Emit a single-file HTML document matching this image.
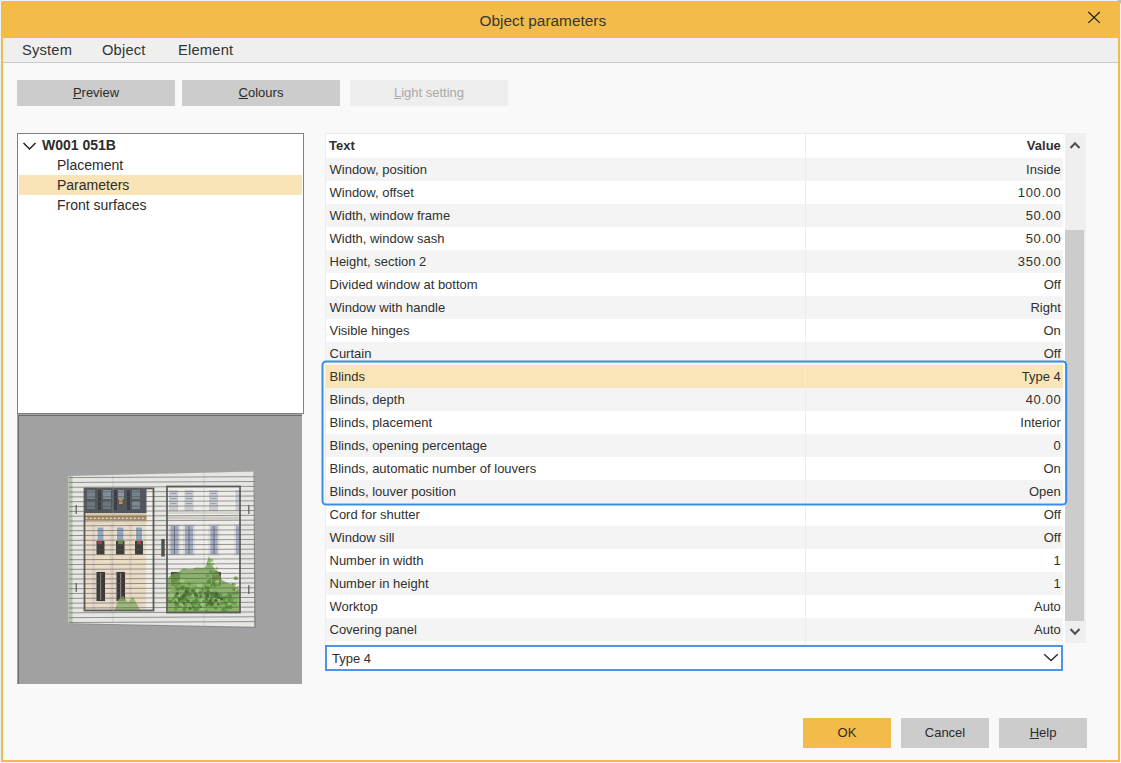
<!DOCTYPE html>
<html><head><meta charset="utf-8">
<style>
*{box-sizing:border-box;margin:0;padding:0}
html,body{width:1121px;height:763px;overflow:hidden;background:#eef1f6;font-family:"Liberation Sans",sans-serif;color:#303030}
.abs{position:absolute}
#dlg{position:absolute;left:1px;top:1px;width:1119px;height:761px;background:#f9f9f9;border:2px solid #f3bc4a;border-top:0;border-radius:2px 2px 0 0}
#title{position:absolute;left:1px;top:1px;width:1119px;height:37px;background:#f3bc4a;border-radius:2px 0 0 0}
#ttl{position:absolute;left:479.5px;top:12.3px;font-size:15.4px;line-height:18px;color:#363636;white-space:nowrap}
#menu{position:absolute;left:3px;top:38px;width:1115px;height:25px;background:#efefef;border-bottom:1px solid #c9c9c9}
.mi{position:absolute;top:41.7px;font-size:14.7px;line-height:17px;color:#333;white-space:nowrap;letter-spacing:0.2px}
.btn{position:absolute;top:80px;height:26px;width:158px;background:#cccccc;font-size:13px;line-height:26px;text-align:center;color:#2b2b2b}
.btn u{text-decoration:underline;text-underline-offset:1px}
#tree{position:absolute;left:17px;top:133px;width:287px;height:281px;background:#fff;border:1px solid #7b8089}
.ti{position:absolute;left:39px;height:20px;line-height:20px;font-size:14px;white-space:nowrap;color:#2c2c2c}
#prev{position:absolute;left:17px;top:414px;width:285px;height:270px;background:#a1a1a1;border-left:1px solid #6d6d6d}
#tbl{position:absolute;left:325px;top:133px;width:740px;height:510px;background:#fff;border-top:1px solid #e9e9e9;border-left:1px solid #ececec}
.row{position:absolute;left:0px;width:737px;height:23px;font-size:13px;line-height:23px;white-space:nowrap}
.row .k{position:absolute;left:3.5px;top:0}
.row .v{position:absolute;right:2.2px;top:0}
.g{background:#f4f4f4}
.n{letter-spacing:0.65px;margin-right:-0.65px}
.sel{background:#f9e5b8}
#div{position:absolute;left:479px;top:0;width:1px;height:509px;background:#ececec}
#sb{position:absolute;left:1065px;top:133px;width:21px;height:510px;background:#efefef}
#thumb{position:absolute;left:1065px;top:230px;width:19px;height:391px;background:#cccccc}
#selbox{position:absolute;left:321.6px;top:360.6px;width:745.6px;height:144.6px;border:2px solid #3d8de6;border-radius:4px}
#dd{position:absolute;left:325px;top:645px;width:738px;height:26px;background:#fff;border:2px solid #4f94e4}
.bb{position:absolute;top:718px;height:30px;width:88px;background:#cccccc;font-size:13px;line-height:30px;text-align:center;color:#2b2b2b}
</style></head><body>
<div id="dlg"></div>
<div class="abs" style="left:1117px;top:0;width:4px;height:4px;background:#b4c2b6;clip-path:polygon(0 0,100% 0,100% 100%)"></div>
<div id="title"></div>
<div id="ttl">Object parameters</div>
<svg class="abs" style="left:1086px;top:9px" width="16" height="16" viewBox="0 0 16 16"><path d="M2.3 3L13.8 13.8M13.8 3L2.3 13.8" stroke="#1e1e1e" stroke-width="1.15" fill="none"/></svg>
<div id="menu"></div>
<div class="mi" style="left:22px">System</div>
<div class="mi" style="left:102px">Object</div>
<div class="mi" style="left:178px">Element</div>

<div class="btn" style="left:17px"><u>P</u>review</div>
<div class="btn" style="left:182px"><u>C</u>olours</div>
<div class="btn" style="left:350px;background:#eeeeee;color:#a9a9a9"><u>L</u>ight setting</div>

<div id="tree">
  <div class="abs" style="left:1px;top:41px;width:283px;height:20px;background:#f8e4b6"></div>
  <svg class="abs" style="left:4px;top:7.3px" width="16" height="10" viewBox="0 0 16 10"><path d="M1.5 2L7.5 8L13.5 2" stroke="#222" stroke-width="1.5" fill="none"/></svg>
  <div class="ti" style="left:24px;top:1px;font-weight:bold">W001 051B</div>
  <div class="ti" style="top:21px">Placement</div>
  <div class="ti" style="top:41px">Parameters</div>
  <div class="ti" style="top:61px">Front surfaces</div>
</div>
<!--PREV--><svg class="abs" style="left:17px;top:414px" width="285" height="270" viewBox="17 414 285 270">
<rect x="17" y="414" width="285" height="270" fill="#a1a1a1"/>
<rect x="18" y="415" width="1" height="269" fill="#6c6c6c"/>
<rect x="18" y="415" width="284" height="1" fill="#6c6c6c"/>
<polygon points="69,476.5 254,471.5 256,628 69,624" fill="#8a8a8a"/>
<polygon points="68.5,476 253.5,471.5 254.2,626.8 68.5,623.2" fill="#e6e6e2"/>
<polygon points="68.5,476 72.5,476 72.5,623.2 68.5,623.2" fill="#b3c3ae"/>
<!-- left pane -->
<rect x="84.5" y="488.5" width="69" height="122" fill="#ecdcc6"/>
<rect x="146" y="488.5" width="7.5" height="122" fill="#f2eee8"/>
<rect x="84.5" y="488.5" width="62" height="24.5" fill="#525860"/>
<rect x="87" y="490" width="8" height="9" fill="#76828c"/><rect x="98" y="490" width="3" height="20" fill="#3a3e44"/><rect x="103" y="490" width="8" height="9" fill="#828e98"/><rect x="114" y="490" width="3" height="20" fill="#3a3e44"/><rect x="118" y="490" width="6" height="9" fill="#8c969c"/><rect x="127" y="490" width="3" height="20" fill="#3a3e44"/><rect x="132" y="490" width="8" height="9" fill="#76828c"/>
<rect x="87" y="501" width="8" height="8" fill="#6a7680"/><rect x="103" y="501" width="8" height="8" fill="#6a7680"/><rect x="119" y="499" width="3.5" height="5" fill="#e58a3c"/><rect x="132" y="501" width="8" height="8" fill="#7a8690"/>
<rect x="84.5" y="513" width="62" height="3" fill="#d8c6a6"/>
<rect x="84.5" y="516" width="62" height="4.5" fill="#a88a5e"/>
<g fill="#f0e6d0"><rect x="86" y="517.5" width="1.5" height="1.5"/><rect x="90" y="517.5" width="1.5" height="1.5"/><rect x="94" y="517.5" width="1.5" height="1.5"/><rect x="98" y="517.5" width="1.5" height="1.5"/><rect x="102" y="517.5" width="1.5" height="1.5"/><rect x="106" y="517.5" width="1.5" height="1.5"/><rect x="110" y="517.5" width="1.5" height="1.5"/><rect x="114" y="517.5" width="1.5" height="1.5"/><rect x="118" y="517.5" width="1.5" height="1.5"/><rect x="122" y="517.5" width="1.5" height="1.5"/><rect x="126" y="517.5" width="1.5" height="1.5"/><rect x="130" y="517.5" width="1.5" height="1.5"/><rect x="134" y="517.5" width="1.5" height="1.5"/><rect x="138" y="517.5" width="1.5" height="1.5"/><rect x="142" y="517.5" width="1.5" height="1.5"/></g>
<rect x="84.5" y="520.5" width="62" height="3" fill="#e4d4bc"/>
<g fill="#dcd0c4"><rect x="92" y="524" width="3" height="86"/><rect x="110" y="524" width="3" height="86"/><rect x="129" y="524" width="3" height="86"/></g>
<rect x="96.5" y="526.5" width="8" height="28" fill="#e8e6e6"/><rect x="97.5" y="527.5" width="6" height="14" fill="#94a6bc"/><rect x="96.5" y="541" width="8" height="13.5" fill="#403e3a"/>
<rect x="116" y="526.5" width="8.5" height="28" fill="#e8e6e6"/><rect x="117" y="527.5" width="6.5" height="14" fill="#94a6bc"/><rect x="116" y="541" width="8.5" height="13.5" fill="#3e4038"/>
<rect x="135" y="526.5" width="8" height="28" fill="#e8e6e6"/><rect x="136" y="527.5" width="6" height="14" fill="#94a6bc"/><rect x="135" y="541" width="8" height="13.5" fill="#403e3a"/>
<rect x="98" y="541" width="4" height="3" fill="#b04040"/><rect x="118" y="541" width="5" height="3" fill="#6a8a3a"/><rect x="137" y="541" width="4" height="3" fill="#b04040"/>
<rect x="95" y="570.5" width="11" height="32" fill="#ddd6d0"/><rect x="115" y="570.5" width="11" height="32" fill="#ddd6d0"/>
<rect x="96.5" y="572" width="8.5" height="29" fill="#3a3836"/><rect x="116.5" y="572" width="8.5" height="29" fill="#3a3836"/>
<rect x="100" y="573" width="1.2" height="27" fill="#8a8680"/><rect x="120" y="573" width="1.2" height="27" fill="#8a8680"/>
<path d="M115 610 L118 600 L123 596 L128 602 L133 597 L137 604 L140 610Z" fill="#8ab066" opacity="0.8"/>
<rect x="84.5" y="488.5" width="69" height="122" fill="none" stroke="#5a5a5a" stroke-width="1.8"/>
<!-- right pane -->
<rect x="167" y="486.5" width="73" height="126" fill="#eeede9"/>
<g fill="#c9ccd2"><rect x="169" y="490" width="9" height="21"/><rect x="184.5" y="490" width="9" height="21"/><rect x="209" y="490" width="9" height="21"/><rect x="235.5" y="490" width="4" height="21"/></g>
<g fill="#9aa2b0"><rect x="170.5" y="493" width="6" height="1"/><rect x="170.5" y="498" width="6" height="1"/><rect x="170.5" y="503" width="6" height="1"/><rect x="186" y="493" width="6" height="1"/><rect x="186" y="498" width="6" height="1"/><rect x="186" y="503" width="6" height="1"/><rect x="210.5" y="493" width="6" height="1"/><rect x="210.5" y="498" width="6" height="1"/><rect x="210.5" y="503" width="6" height="1"/></g>
<rect x="167" y="511.5" width="73" height="2.5" fill="#d6d6d0"/><rect x="167" y="516.5" width="73" height="3" fill="#cbcbc4"/>
<g fill="#dadada"><rect x="168.5" y="524" width="12" height="32"/><rect x="183" y="524" width="12" height="32"/><rect x="208.5" y="524" width="11" height="32"/><rect x="234" y="524" width="6" height="32"/></g>
<g fill="#a3acc2"><rect x="170.5" y="526" width="8" height="28"/><rect x="185" y="526" width="8" height="28"/><rect x="210.5" y="526" width="7" height="28"/><rect x="236" y="526" width="3.5" height="28"/></g>
<g fill="#6a7288"><rect x="174" y="526" width="1" height="28"/><rect x="188.5" y="526" width="1" height="28"/><rect x="213.5" y="526" width="1" height="28"/></g>
<rect x="171" y="572" width="9" height="14" fill="#4e4e48"/><rect x="212" y="572" width="9" height="14" fill="#4e4e48"/>
<defs><clipPath id="rp"><rect x="167" y="486.5" width="73" height="126"/></clipPath></defs>
<g clip-path="url(#rp)"><path d="M168 612 L168 578 C172 572 178 574 181 570 C185 566 190 572 194 568 C198 566 203 570 206 566 L209 556 L212 566 C216 570 220 574 222 580 C228 584 234 584 240 590 L240 612Z" fill="#73a34c" opacity="0.8"/>
<circle cx="180.7" cy="597.9" r="3.1" fill="#9cc47e"/><circle cx="180.7" cy="607.4" r="1.8" fill="#9cc47e"/><circle cx="185.6" cy="605.4" r="1.7" fill="#5e9440"/><circle cx="172.0" cy="597.2" r="3.0" fill="#6fa04a"/><circle cx="184.7" cy="592.7" r="2.3" fill="#86b462"/><circle cx="185.4" cy="606.6" r="1.6" fill="#6fa04a"/><circle cx="173.3" cy="587.7" r="1.6" fill="#9cc47e"/><circle cx="177.1" cy="598.9" r="1.8" fill="#86b462"/><circle cx="185.9" cy="596.0" r="2.6" fill="#9cc47e"/><circle cx="186.3" cy="593.0" r="2.4" fill="#6fa04a"/><circle cx="187.8" cy="590.1" r="1.9" fill="#5e9440"/><circle cx="168.8" cy="598.0" r="1.7" fill="#6fa04a"/><circle cx="191.7" cy="592.4" r="3.1" fill="#6fa04a"/><circle cx="169.5" cy="592.0" r="2.7" fill="#9cc47e"/><circle cx="170.0" cy="600.1" r="2.8" fill="#5e9440"/><circle cx="177.4" cy="590.0" r="1.5" fill="#9cc47e"/><circle cx="189.2" cy="583.8" r="1.9" fill="#6fa04a"/><circle cx="168.3" cy="594.9" r="2.3" fill="#86b462"/><circle cx="180.5" cy="586.1" r="2.7" fill="#86b462"/><circle cx="179.7" cy="592.3" r="2.2" fill="#86b462"/><circle cx="195.3" cy="599.0" r="3.2" fill="#6fa04a"/><circle cx="173.9" cy="592.6" r="3.0" fill="#6fa04a"/><circle cx="180.4" cy="580.3" r="2.5" fill="#5e9440"/><circle cx="178.8" cy="582.4" r="1.9" fill="#86b462"/><circle cx="185.4" cy="584.1" r="2.5" fill="#86b462"/><circle cx="192.3" cy="585.9" r="1.8" fill="#86b462"/><circle cx="190.9" cy="588.0" r="1.8" fill="#86b462"/><circle cx="187.2" cy="592.4" r="2.3" fill="#6fa04a"/><circle cx="179.8" cy="583.3" r="1.6" fill="#5e9440"/><circle cx="174.7" cy="602.5" r="1.9" fill="#9cc47e"/><circle cx="176.2" cy="585.6" r="2.7" fill="#6fa04a"/><circle cx="171.5" cy="595.3" r="2.6" fill="#6fa04a"/><circle cx="175.8" cy="609.4" r="1.8" fill="#6fa04a"/><circle cx="169.9" cy="593.2" r="1.9" fill="#6fa04a"/><circle cx="172.9" cy="591.8" r="2.5" fill="#86b462"/><circle cx="180.6" cy="590.6" r="2.7" fill="#86b462"/><circle cx="184.5" cy="609.6" r="2.3" fill="#5e9440"/><circle cx="168.6" cy="600.4" r="2.3" fill="#5e9440"/><circle cx="170.1" cy="597.5" r="2.8" fill="#86b462"/><circle cx="177.9" cy="601.9" r="3.0" fill="#9cc47e"/><circle cx="182.0" cy="580.5" r="2.6" fill="#9cc47e"/><circle cx="184.3" cy="599.5" r="1.6" fill="#6fa04a"/><circle cx="188.4" cy="592.4" r="2.7" fill="#9cc47e"/><circle cx="180.3" cy="606.8" r="1.6" fill="#6fa04a"/><circle cx="176.7" cy="582.8" r="1.5" fill="#6fa04a"/><circle cx="181.9" cy="599.7" r="3.1" fill="#5e9440"/><circle cx="193.1" cy="591.8" r="1.7" fill="#86b462"/><circle cx="182.5" cy="604.1" r="2.1" fill="#9cc47e"/><circle cx="182.0" cy="587.7" r="2.2" fill="#5e9440"/><circle cx="173.6" cy="593.8" r="2.9" fill="#86b462"/><circle cx="192.6" cy="592.3" r="2.5" fill="#5e9440"/><circle cx="173.9" cy="584.3" r="2.1" fill="#6fa04a"/><circle cx="187.9" cy="610.4" r="2.0" fill="#86b462"/><circle cx="171.2" cy="595.1" r="3.1" fill="#9cc47e"/><circle cx="178.7" cy="596.6" r="2.6" fill="#9cc47e"/><circle cx="177.0" cy="606.5" r="2.0" fill="#6fa04a"/><circle cx="187.0" cy="589.0" r="2.1" fill="#6fa04a"/><circle cx="185.9" cy="593.0" r="1.8" fill="#5e9440"/><circle cx="174.6" cy="584.5" r="1.6" fill="#6fa04a"/><circle cx="180.5" cy="600.2" r="2.6" fill="#5e9440"/><circle cx="219.7" cy="602.2" r="1.8" fill="#9cc47e"/><circle cx="197.2" cy="603.0" r="2.8" fill="#6fa04a"/><circle cx="194.7" cy="590.6" r="2.1" fill="#86b462"/><circle cx="201.6" cy="605.2" r="3.0" fill="#6fa04a"/><circle cx="202.1" cy="608.0" r="2.2" fill="#9cc47e"/><circle cx="203.5" cy="600.5" r="3.0" fill="#9cc47e"/><circle cx="206.6" cy="601.3" r="2.4" fill="#5e9440"/><circle cx="203.8" cy="601.2" r="1.8" fill="#6fa04a"/><circle cx="195.8" cy="608.2" r="3.2" fill="#5e9440"/><circle cx="206.2" cy="605.1" r="2.0" fill="#6fa04a"/><circle cx="200.2" cy="585.3" r="2.2" fill="#9cc47e"/><circle cx="213.6" cy="596.6" r="1.5" fill="#6fa04a"/><circle cx="202.7" cy="584.0" r="2.4" fill="#86b462"/><circle cx="217.8" cy="597.5" r="2.7" fill="#9cc47e"/><circle cx="219.3" cy="596.8" r="3.1" fill="#6fa04a"/><circle cx="213.3" cy="595.3" r="2.4" fill="#86b462"/><circle cx="205.7" cy="606.6" r="2.5" fill="#5e9440"/><circle cx="210.5" cy="609.7" r="3.0" fill="#86b462"/><circle cx="198.7" cy="587.0" r="2.4" fill="#5e9440"/><circle cx="207.3" cy="588.6" r="2.4" fill="#6fa04a"/><circle cx="208.4" cy="583.8" r="3.1" fill="#9cc47e"/><circle cx="206.4" cy="610.7" r="1.7" fill="#6fa04a"/><circle cx="211.1" cy="584.8" r="2.4" fill="#9cc47e"/><circle cx="201.9" cy="589.9" r="2.3" fill="#5e9440"/><circle cx="202.9" cy="605.8" r="3.0" fill="#9cc47e"/><circle cx="205.8" cy="586.0" r="2.2" fill="#6fa04a"/><circle cx="195.2" cy="589.4" r="2.7" fill="#5e9440"/><circle cx="212.2" cy="589.8" r="2.3" fill="#9cc47e"/><circle cx="212.4" cy="586.4" r="2.4" fill="#5e9440"/><circle cx="212.0" cy="602.6" r="3.0" fill="#6fa04a"/><circle cx="201.0" cy="594.6" r="2.4" fill="#86b462"/><circle cx="206.2" cy="607.2" r="2.4" fill="#86b462"/><circle cx="205.9" cy="606.8" r="2.5" fill="#86b462"/><circle cx="196.4" cy="603.7" r="2.9" fill="#86b462"/><circle cx="199.1" cy="591.8" r="3.1" fill="#86b462"/><circle cx="213.9" cy="588.4" r="1.7" fill="#86b462"/><circle cx="201.4" cy="595.2" r="3.1" fill="#86b462"/><circle cx="195.4" cy="600.6" r="2.9" fill="#6fa04a"/><circle cx="195.4" cy="602.1" r="3.0" fill="#5e9440"/><circle cx="192.7" cy="597.2" r="2.8" fill="#86b462"/><circle cx="214.7" cy="596.5" r="1.5" fill="#9cc47e"/><circle cx="193.7" cy="588.2" r="1.8" fill="#86b462"/><circle cx="219.4" cy="595.9" r="2.8" fill="#5e9440"/><circle cx="201.5" cy="594.9" r="2.1" fill="#86b462"/><circle cx="208.2" cy="583.4" r="2.7" fill="#86b462"/><circle cx="194.8" cy="595.7" r="2.8" fill="#9cc47e"/><circle cx="218.5" cy="599.9" r="1.7" fill="#6fa04a"/><circle cx="199.4" cy="585.4" r="2.9" fill="#9cc47e"/><circle cx="207.2" cy="588.3" r="2.5" fill="#5e9440"/><circle cx="214.8" cy="590.2" r="3.0" fill="#86b462"/><circle cx="215.1" cy="594.4" r="3.0" fill="#5e9440"/><circle cx="213.6" cy="604.4" r="2.2" fill="#86b462"/><circle cx="191.3" cy="592.6" r="2.3" fill="#6fa04a"/><circle cx="198.6" cy="589.0" r="2.2" fill="#86b462"/><circle cx="206.1" cy="593.9" r="3.2" fill="#86b462"/><circle cx="211.4" cy="604.3" r="3.2" fill="#6fa04a"/><circle cx="196.6" cy="595.4" r="2.4" fill="#86b462"/><circle cx="197.3" cy="590.7" r="2.1" fill="#9cc47e"/><circle cx="239.2" cy="601.6" r="2.8" fill="#9cc47e"/><circle cx="230.3" cy="606.2" r="1.3" fill="#86b462"/><circle cx="225.3" cy="611.3" r="2.6" fill="#6fa04a"/><circle cx="226.3" cy="599.9" r="1.7" fill="#9cc47e"/><circle cx="230.3" cy="596.8" r="1.7" fill="#5e9440"/><circle cx="229.5" cy="594.8" r="2.3" fill="#5e9440"/><circle cx="230.1" cy="603.2" r="1.9" fill="#9cc47e"/><circle cx="217.3" cy="595.6" r="1.8" fill="#5e9440"/><circle cx="226.3" cy="599.5" r="2.8" fill="#86b462"/><circle cx="221.9" cy="605.0" r="1.3" fill="#9cc47e"/><circle cx="226.9" cy="592.9" r="1.3" fill="#86b462"/><circle cx="219.0" cy="598.6" r="2.3" fill="#9cc47e"/><circle cx="230.4" cy="603.4" r="2.3" fill="#5e9440"/><circle cx="234.7" cy="600.7" r="2.8" fill="#5e9440"/><circle cx="233.6" cy="593.7" r="1.4" fill="#5e9440"/><circle cx="234.8" cy="603.0" r="1.8" fill="#5e9440"/><circle cx="230.6" cy="605.4" r="2.3" fill="#86b462"/><circle cx="231.2" cy="606.1" r="1.5" fill="#86b462"/><circle cx="228.1" cy="603.7" r="1.5" fill="#6fa04a"/><circle cx="222.7" cy="606.1" r="2.7" fill="#86b462"/><circle cx="229.2" cy="603.1" r="1.8" fill="#9cc47e"/><circle cx="224.5" cy="596.1" r="2.0" fill="#86b462"/><circle cx="218.9" cy="607.4" r="2.2" fill="#86b462"/><circle cx="226.7" cy="605.9" r="1.8" fill="#86b462"/><circle cx="224.9" cy="603.7" r="2.8" fill="#5e9440"/><circle cx="223.0" cy="606.2" r="2.5" fill="#86b462"/><circle cx="226.3" cy="596.9" r="1.4" fill="#5e9440"/><circle cx="229.5" cy="599.6" r="2.3" fill="#5e9440"/><circle cx="223.4" cy="609.9" r="2.2" fill="#5e9440"/><circle cx="227.9" cy="606.3" r="1.7" fill="#86b462"/><circle cx="221.3" cy="603.8" r="1.7" fill="#6fa04a"/><circle cx="223.7" cy="598.6" r="2.2" fill="#5e9440"/><circle cx="226.5" cy="607.3" r="1.7" fill="#5e9440"/><circle cx="233.5" cy="600.4" r="1.3" fill="#5e9440"/><circle cx="230.0" cy="607.1" r="2.4" fill="#5e9440"/><circle cx="235.1" cy="601.0" r="2.5" fill="#86b462"/><circle cx="209.1" cy="581.2" r="2.2" fill="#5e9440"/><circle cx="216.7" cy="568.3" r="1.1" fill="#86b462"/><circle cx="213.8" cy="586.2" r="1.9" fill="#9cc47e"/><circle cx="207.8" cy="576.1" r="2.1" fill="#6fa04a"/><circle cx="211.0" cy="569.6" r="1.1" fill="#5e9440"/><circle cx="208.0" cy="578.2" r="1.2" fill="#9cc47e"/><circle cx="209.9" cy="568.3" r="2.1" fill="#5e9440"/><circle cx="216.2" cy="572.5" r="1.5" fill="#5e9440"/><circle cx="215.1" cy="574.8" r="1.8" fill="#6fa04a"/><circle cx="215.5" cy="585.0" r="1.6" fill="#5e9440"/><circle cx="217.2" cy="582.3" r="2.2" fill="#9cc47e"/><circle cx="218.5" cy="578.4" r="1.7" fill="#6fa04a"/><circle cx="216.6" cy="573.1" r="1.6" fill="#86b462"/><circle cx="209.9" cy="566.9" r="1.9" fill="#86b462"/><circle cx="210.9" cy="572.3" r="1.7" fill="#5e9440"/><circle cx="210.7" cy="565.8" r="1.9" fill="#86b462"/><circle cx="217.9" cy="581.1" r="1.0" fill="#9cc47e"/><circle cx="209.6" cy="568.6" r="2.0" fill="#86b462"/><circle cx="212.3" cy="584.5" r="1.6" fill="#5e9440"/><circle cx="214.5" cy="585.6" r="1.8" fill="#5e9440"/><circle cx="212.8" cy="572.7" r="2.3" fill="#6fa04a"/><circle cx="212.8" cy="568.3" r="1.1" fill="#86b462"/><circle cx="216.6" cy="572.2" r="1.7" fill="#5e9440"/><circle cx="212.4" cy="568.9" r="1.6" fill="#86b462"/><circle cx="210.5" cy="563.3" r="0.9" fill="#86b462"/><circle cx="209.6" cy="560.4" r="1.0" fill="#86b462"/><circle cx="213.1" cy="563.9" r="0.9" fill="#5e9440"/><circle cx="211.7" cy="560.3" r="1.7" fill="#9cc47e"/><circle cx="208.5" cy="563.0" r="1.3" fill="#5e9440"/><circle cx="209.2" cy="562.2" r="1.6" fill="#9cc47e"/><circle cx="209.3" cy="560.5" r="1.3" fill="#86b462"/><circle cx="234.5" cy="584.5" r="1.5" fill="#9cc47e"/><circle cx="237.3" cy="579.1" r="0.9" fill="#86b462"/><circle cx="232.8" cy="584.3" r="1.4" fill="#6fa04a"/><circle cx="235.0" cy="589.4" r="1.1" fill="#6fa04a"/><circle cx="235.7" cy="578.2" r="2.0" fill="#86b462"/><circle cx="237.0" cy="593.0" r="1.7" fill="#5e9440"/><circle cx="238.0" cy="586.9" r="0.9" fill="#86b462"/><circle cx="233.6" cy="589.7" r="1.2" fill="#5e9440"/><circle cx="236.5" cy="589.6" r="1.2" fill="#9cc47e"/><circle cx="175.3" cy="602.3" r="1.8" fill="#4f7f33"/><circle cx="184.1" cy="602.9" r="1.1" fill="#4f7f33"/><circle cx="182.8" cy="587.7" r="2.1" fill="#5b8c3d"/><circle cx="177.9" cy="589.6" r="1.8" fill="#5b8c3d"/><circle cx="181.0" cy="595.9" r="1.0" fill="#5b8c3d"/><circle cx="187.7" cy="593.6" r="1.9" fill="#4f7f33"/><circle cx="188.8" cy="600.6" r="1.0" fill="#5b8c3d"/><circle cx="177.5" cy="593.4" r="1.5" fill="#3f6d28"/><circle cx="182.1" cy="598.2" r="1.9" fill="#4f7f33"/><circle cx="187.7" cy="589.8" r="1.9" fill="#5b8c3d"/><circle cx="186.2" cy="594.5" r="1.6" fill="#4f7f33"/><circle cx="186.8" cy="590.8" r="2.1" fill="#3f6d28"/><circle cx="190.0" cy="608.5" r="1.7" fill="#4f7f33"/><circle cx="188.1" cy="590.7" r="1.1" fill="#4f7f33"/><circle cx="184.5" cy="596.0" r="1.4" fill="#4f7f33"/><circle cx="195.3" cy="594.7" r="1.6" fill="#4f7f33"/><circle cx="183.9" cy="603.5" r="1.3" fill="#3f6d28"/><circle cx="186.0" cy="599.5" r="1.7" fill="#5b8c3d"/><circle cx="177.0" cy="603.9" r="2.1" fill="#5b8c3d"/><circle cx="187.4" cy="588.9" r="2.0" fill="#5b8c3d"/><circle cx="189.4" cy="594.7" r="1.9" fill="#5b8c3d"/><circle cx="192.9" cy="590.5" r="1.7" fill="#4f7f33"/><circle cx="183.9" cy="595.7" r="1.9" fill="#3f6d28"/><circle cx="176.3" cy="604.1" r="2.0" fill="#5b8c3d"/><circle cx="187.8" cy="601.4" r="1.9" fill="#4f7f33"/><circle cx="177.8" cy="597.2" r="1.2" fill="#5b8c3d"/><circle cx="175.8" cy="595.7" r="1.4" fill="#4f7f33"/><circle cx="179.3" cy="599.6" r="1.4" fill="#3f6d28"/><circle cx="191.8" cy="603.3" r="1.9" fill="#5b8c3d"/><circle cx="196.0" cy="600.4" r="1.6" fill="#5b8c3d"/><circle cx="186.6" cy="595.8" r="1.3" fill="#5b8c3d"/><circle cx="193.1" cy="606.5" r="1.5" fill="#5b8c3d"/><circle cx="195.5" cy="593.9" r="1.6" fill="#5b8c3d"/><circle cx="194.7" cy="593.7" r="1.1" fill="#3f6d28"/><circle cx="211.3" cy="598.7" r="1.5" fill="#5b8c3d"/><circle cx="215.1" cy="596.1" r="1.7" fill="#4f7f33"/><circle cx="200.8" cy="606.9" r="1.3" fill="#5b8c3d"/><circle cx="221.2" cy="599.5" r="1.1" fill="#4f7f33"/><circle cx="209.3" cy="603.1" r="2.1" fill="#4f7f33"/><circle cx="218.4" cy="597.4" r="1.7" fill="#3f6d28"/><circle cx="216.5" cy="594.4" r="1.9" fill="#3f6d28"/><circle cx="208.5" cy="592.6" r="2.1" fill="#3f6d28"/><circle cx="200.8" cy="596.0" r="1.4" fill="#4f7f33"/><circle cx="206.3" cy="599.0" r="1.6" fill="#4f7f33"/><circle cx="204.0" cy="601.7" r="1.1" fill="#4f7f33"/><circle cx="206.7" cy="596.3" r="1.4" fill="#4f7f33"/><circle cx="207.2" cy="594.1" r="1.4" fill="#3f6d28"/><circle cx="217.5" cy="597.1" r="1.6" fill="#4f7f33"/><circle cx="211.8" cy="604.0" r="1.7" fill="#3f6d28"/><circle cx="211.7" cy="593.8" r="2.1" fill="#4f7f33"/><circle cx="212.2" cy="596.1" r="2.0" fill="#5b8c3d"/><circle cx="218.3" cy="604.3" r="1.2" fill="#3f6d28"/><circle cx="205.6" cy="593.4" r="2.0" fill="#4f7f33"/><circle cx="213.9" cy="593.9" r="1.2" fill="#4f7f33"/><circle cx="208.0" cy="595.9" r="1.3" fill="#3f6d28"/><circle cx="208.7" cy="592.3" r="1.6" fill="#5b8c3d"/><circle cx="200.3" cy="592.7" r="1.8" fill="#5b8c3d"/><circle cx="221.5" cy="598.8" r="1.6" fill="#3f6d28"/><circle cx="210.4" cy="600.7" r="1.5" fill="#3f6d28"/><circle cx="196.4" cy="595.7" r="1.9" fill="#4f7f33"/><circle cx="199.0" cy="604.7" r="1.0" fill="#4f7f33"/><circle cx="206.9" cy="605.0" r="1.5" fill="#5b8c3d"/><circle cx="215.7" cy="608.2" r="1.4" fill="#5b8c3d"/><circle cx="215.9" cy="600.3" r="1.6" fill="#3f6d28"/></g>
<rect x="167" y="486.5" width="73" height="126" fill="none" stroke="#606060" stroke-width="1.8"/>
<!-- handle -->
<rect x="161.3" y="539" width="3.4" height="17.5" fill="#505050"/>
<!-- hinges -->
<rect x="75.5" y="505" width="1.5" height="9" fill="#777"/><rect x="75.5" y="583" width="1.5" height="9" fill="#777"/>
<rect x="248" y="505" width="1.5" height="9" fill="#777"/><rect x="248" y="585" width="1.5" height="9" fill="#777"/>
<g stroke="#a8a8a8" stroke-width="0.6" opacity="0.6"><line x1="113" y1="476" x2="113" y2="623"/><line x1="204" y1="473" x2="204" y2="626"/></g>
<g stroke="#555" stroke-width="0.9" opacity="0.65"><line x1="69" y1="477.60" x2="254.5" y2="476.70"/><line x1="69" y1="482.43" x2="254.5" y2="481.53"/><line x1="69" y1="487.26" x2="254.5" y2="486.36"/><line x1="69" y1="492.09" x2="254.5" y2="491.19"/><line x1="69" y1="496.92" x2="254.5" y2="496.02"/><line x1="69" y1="501.75" x2="254.5" y2="500.85"/><line x1="69" y1="506.58" x2="254.5" y2="505.68"/><line x1="69" y1="511.41" x2="254.5" y2="510.51"/><line x1="69" y1="516.24" x2="254.5" y2="515.34"/><line x1="69" y1="521.07" x2="254.5" y2="520.17"/><line x1="69" y1="525.90" x2="254.5" y2="525.00"/><line x1="69" y1="530.73" x2="254.5" y2="529.83"/><line x1="69" y1="535.56" x2="254.5" y2="534.66"/><line x1="69" y1="540.39" x2="254.5" y2="539.49"/><line x1="69" y1="545.22" x2="254.5" y2="544.32"/><line x1="69" y1="550.05" x2="254.5" y2="549.15"/><line x1="69" y1="554.88" x2="254.5" y2="553.98"/><line x1="69" y1="559.71" x2="254.5" y2="558.81"/><line x1="69" y1="564.54" x2="254.5" y2="563.64"/><line x1="69" y1="569.37" x2="254.5" y2="568.47"/><line x1="69" y1="574.20" x2="254.5" y2="573.30"/><line x1="69" y1="579.03" x2="254.5" y2="578.13"/><line x1="69" y1="583.86" x2="254.5" y2="582.96"/><line x1="69" y1="588.69" x2="254.5" y2="587.79"/><line x1="69" y1="593.52" x2="254.5" y2="592.62"/><line x1="69" y1="598.35" x2="254.5" y2="597.45"/><line x1="69" y1="603.18" x2="254.5" y2="602.28"/><line x1="69" y1="608.01" x2="254.5" y2="607.11"/><line x1="69" y1="612.84" x2="254.5" y2="611.94"/><line x1="69" y1="617.67" x2="254.5" y2="616.77"/><line x1="69" y1="622.50" x2="254.5" y2="621.60"/></g>
</svg><!--/PREV-->

<div id="tbl">
  <div class="row" style="top:0;height:24px;line-height:24px;font-weight:bold"><span class="k" style="left:3px">Text</span><span class="v">Value</span></div>
  <div class="row g" style="top:24px"><span class="k">Window, position</span><span class="v">Inside</span></div>
  <div class="row" style="top:47px"><span class="k">Window, offset</span><span class="v n">100.00</span></div>
  <div class="row g" style="top:70px"><span class="k">Width, window frame</span><span class="v n">50.00</span></div>
  <div class="row" style="top:93px"><span class="k">Width, window sash</span><span class="v n">50.00</span></div>
  <div class="row g" style="top:116px"><span class="k">Height, section 2</span><span class="v n">350.00</span></div>
  <div class="row" style="top:139px"><span class="k">Divided window at bottom</span><span class="v">Off</span></div>
  <div class="row g" style="top:162px"><span class="k">Window with handle</span><span class="v">Right</span></div>
  <div class="row" style="top:185px"><span class="k">Visible hinges</span><span class="v">On</span></div>
  <div class="row g" style="top:208px"><span class="k">Curtain</span><span class="v">Off</span></div>
  <div class="row sel" style="top:231px"><span class="k">Blinds</span><span class="v">Type 4</span></div>
  <div class="row g" style="top:254px"><span class="k">Blinds, depth</span><span class="v n">40.00</span></div>
  <div class="row" style="top:277px"><span class="k">Blinds, placement</span><span class="v">Interior</span></div>
  <div class="row g" style="top:300px"><span class="k">Blinds, opening percentage</span><span class="v">0</span></div>
  <div class="row" style="top:323px"><span class="k">Blinds, automatic number of louvers</span><span class="v">On</span></div>
  <div class="row g" style="top:346px"><span class="k">Blinds, louver position</span><span class="v">Open</span></div>
  <div class="row" style="top:369px"><span class="k">Cord for shutter</span><span class="v">Off</span></div>
  <div class="row g" style="top:392px"><span class="k">Window sill</span><span class="v">Off</span></div>
  <div class="row" style="top:415px"><span class="k">Number in width</span><span class="v">1</span></div>
  <div class="row g" style="top:438px"><span class="k">Number in height</span><span class="v">1</span></div>
  <div class="row" style="top:461px"><span class="k">Worktop</span><span class="v">Auto</span></div>
  <div class="row g" style="top:484px"><span class="k">Covering panel</span><span class="v">Auto</span></div>
  <div id="div"></div>
</div>
<div id="sb"></div>
<div id="thumb"></div>
<svg class="abs" style="left:1068px;top:138.5px" width="14" height="12" viewBox="0 0 14 12"><path d="M2.5 9L7 4.3L11.5 9" stroke="#505050" stroke-width="2.1" fill="none"/></svg>
<svg class="abs" style="left:1068px;top:625.5px" width="14" height="12" viewBox="0 0 14 12"><path d="M2.5 3L7 7.7L11.5 3" stroke="#505050" stroke-width="2.1" fill="none"/></svg>
<svg class="abs" style="left:318px;top:356px" width="754" height="154" viewBox="318 356 754 154"><rect x="322.5" y="361.5" width="743.7" height="143" rx="3.5" ry="3.5" fill="none" stroke="#3a8de6" stroke-width="2"/></svg>
<div id="dd"><span class="abs" style="left:5px;top:0.7px;font-size:13px;line-height:22px">Type 4</span>
<svg class="abs" style="left:716px;top:6px" width="16" height="10" viewBox="0 0 16 10"><path d="M1.2 1.3L8 7.6L14.8 1.3" stroke="#2a2a2a" stroke-width="1.35" fill="none"/></svg></div>

<div class="bb" style="left:803px;background:#f3bc4a">OK</div>
<div class="bb" style="left:901px">Cancel</div>
<div class="bb" style="left:999px"><u>H</u>elp</div>
</body></html>
